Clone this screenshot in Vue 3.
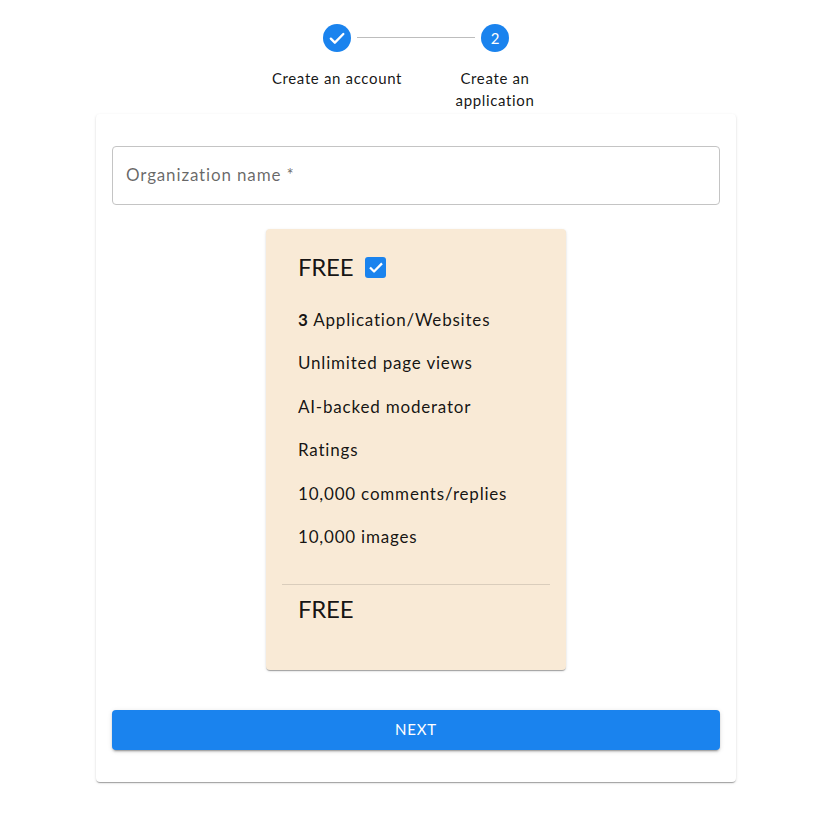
<script setup>
const features = ['Unlimited page views', 'AI-backed moderator', 'Ratings', '10,000 comments/replies', '10,000 images']
</script>

<template>
  <div class="page">
    <div class="stepper">
      <div class="step">
        <span class="dot">
          <svg viewBox="0 0 24 24" width="20" height="20"><path fill="none" stroke="#fff" stroke-width="2.8" stroke-linecap="round" stroke-linejoin="round" d="M4.6 12.8l4.8 4.8L19.6 7.2"/></svg>
        </span>
        <span class="label">Create an account</span>
      </div>
      <div class="step">
        <span class="line"></span>
        <span class="dot num">2</span>
        <span class="label narrow">Create an application</span>
      </div>
    </div>

    <div class="card">
      <div class="field">Organization name *</div>
      <div class="plan">
        <div class="plan-head">
          <span class="plan-title">FREE</span>
          <span class="check">
            <svg viewBox="0 0 24 24" width="18" height="18"><path fill="none" stroke="#fff" stroke-width="3" stroke-linejoin="round" d="M4 12.6l5.4 5.4L20 7.2"/></svg>
          </span>
        </div>
        <ul class="features">
          <li><b>3</b> Application/Websites</li>
          <li v-for="f in features" :key="f">{{ f }}</li>
        </ul>
        <div class="divider"></div>
        <div class="plan-title price">FREE</div>
      </div>
      <button class="next" type="button">NEXT</button>
    </div>
  </div>
</template>

<style>
body { background: #fff; }
</style>

<style scoped>
.page {
  width: 820px;
  height: 826px;
  box-sizing: border-box;
  padding: 24px 0 0 12px;
  display: flex;
  flex-direction: column;
  align-items: center;
  font-family: Lato, "Noto Sans", sans-serif;
  color: rgba(0, 0, 0, 0.87);
  overflow: hidden;
}
.stepper {
  display: flex;
  width: 316px;
  height: 90px;
}
.step {
  position: relative;
  flex: 1;
  display: flex;
  flex-direction: column;
  align-items: center;
  padding: 0 8px;
}
.dot {
  width: 28px;
  height: 28px;
  border-radius: 50%;
  background: #1a83ee;
  color: #fff;
  display: flex;
  align-items: center;
  justify-content: center;
  flex: none;
}
.num { font-size: 15px; }
.line {
  position: absolute;
  top: 13px;
  left: calc(-50% + 20px);
  right: calc(50% + 20px);
  border-top: 1px solid #bdbdbd;
}
.label {
  margin-top: 15px;
  font-size: 15px;
  line-height: 22px;
  text-align: center;
  white-space: nowrap;
  letter-spacing: 0.65px;
  color: rgba(0, 0, 0, 0.92);
}
.narrow {
  white-space: normal;
  width: 100px;
}
.card {
  width: 640px;
  height: 668px;
  box-sizing: border-box;
  padding: 32px 16px;
  background: #fff;
  border-radius: 4px;
  box-shadow: 0 2px 1px -1px rgba(0,0,0,.2), 0 1px 1px rgba(0,0,0,.14), 0 1px 3px rgba(0,0,0,.12);
  display: flex;
  flex-direction: column;
  align-items: center;
}
.field {
  align-self: stretch;
  height: 59px;
  box-sizing: border-box;
  border: 1px solid #c4c4c4;
  border-radius: 4px;
  padding: 0 13px 2px;
  display: flex;
  align-items: center;
  font-size: 17px;
  letter-spacing: 0.85px;
  color: rgba(0, 0, 0, 0.6);
}
.plan {
  margin-top: 24px;
  width: 300px;
  height: 441px;
  box-sizing: border-box;
  padding: 16px 16px 0;
  background: #f9ead6;
  border-radius: 4px;
  box-shadow: 0 2px 1px -1px rgba(0,0,0,.2), 0 1px 1px rgba(0,0,0,.14), 0 1px 3px rgba(0,0,0,.12);
}
.plan-head {
  display: flex;
  align-items: center;
  gap: 12px;
  padding: 6px 16px 0;
  height: 32px;
}
.plan-title {
  font-size: 24px;
  line-height: 32px;
  letter-spacing: -0.25px;
  color: rgba(0, 0, 0, 0.92);
}
.check {
  width: 21px;
  height: 21px;
  border-radius: 3px;
  background: #1a83ee;
  display: flex;
  align-items: center;
  justify-content: center;
}
.features {
  list-style: none;
  margin: 0;
  padding: 14.7px 16px 0;
}
.features li {
  height: 43.5px;
  line-height: 43.5px;
  font-size: 17px;
  letter-spacing: 0.8px;
  white-space: nowrap;
  color: rgba(0, 0, 0, 0.92);
}
.features b { font-weight: 700; }
.divider {
  margin-top: 25.3px;
  border-top: 1px solid rgba(0, 0, 0, 0.12);
}
.price {
  padding: 8px 16px 0;
}
.next {
  margin-top: 40px;
  align-self: stretch;
  height: 40px;
  border: 0;
  border-radius: 4px;
  background: #1a83ee;
  color: #fff;
  font: inherit;
  font-size: 15px;
  letter-spacing: 0.8px;
  padding-bottom: 4px;
  box-shadow: 0 3px 1px -2px rgba(0,0,0,.2), 0 2px 2px rgba(0,0,0,.14), 0 1px 5px rgba(0,0,0,.12);
}
</style>
